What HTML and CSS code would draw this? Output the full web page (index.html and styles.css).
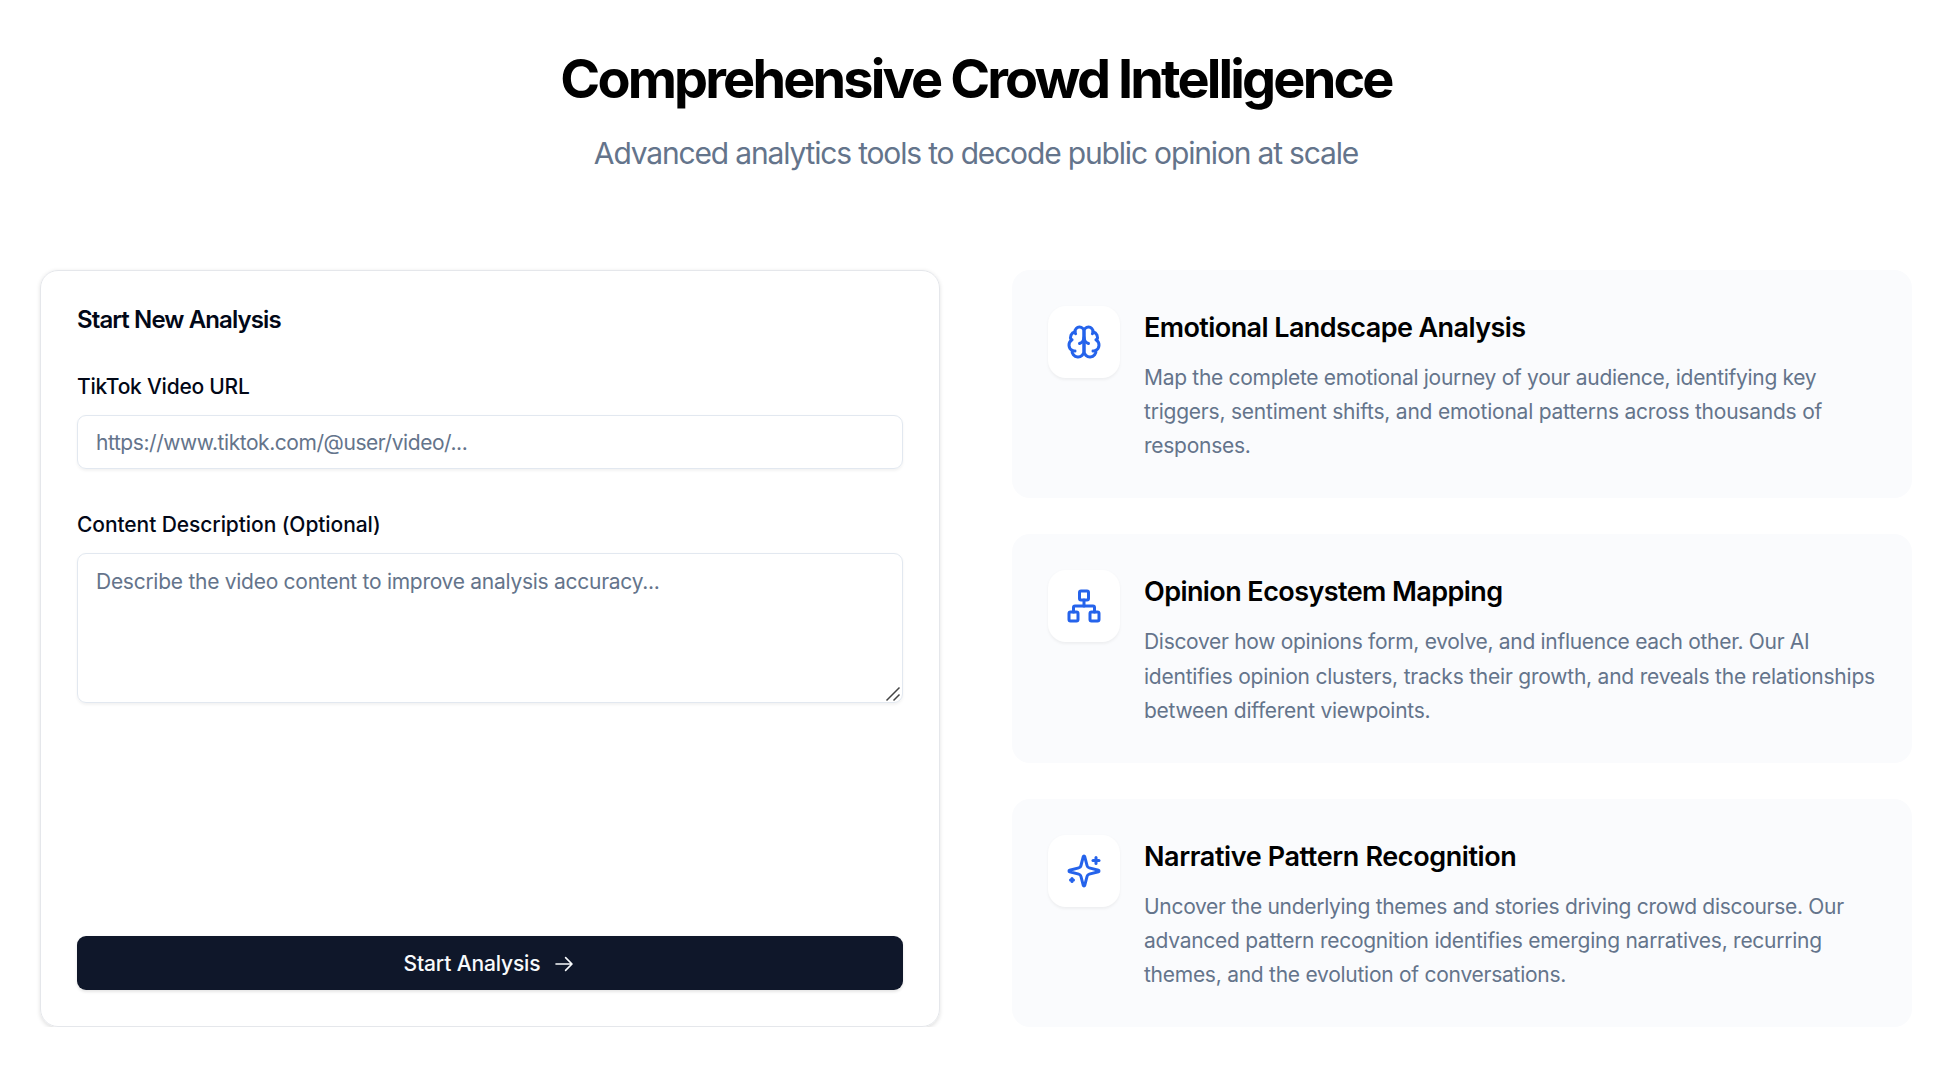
FILE: index.html
```
<!DOCTYPE html>
<html lang="en">
<head>
<meta charset="utf-8">
<title>Comprehensive Crowd Intelligence</title>
<link rel="stylesheet" href="styles.css">
</head>
<body>
<header class="intro">
  <h1 class="intro-title">Comprehensive Crowd Intelligence</h1>
  <p class="intro-text">Advanced analytics tools to decode public opinion at scale</p>
</header>
<main class="columns">
  <form class="card">
    <h2 class="card-title">Start New Analysis</h2>
    <label class="label label-url" for="url">TikTok Video URL</label>
    <input class="field field-url" id="url" type="text" placeholder="https://www.tiktok.com/@user/video/...">
    <label class="label label-description" for="desc">Content Description (Optional)</label>
    <div class="area">
      <textarea class="field field-area" id="desc" placeholder="Describe the video content to improve analysis accuracy..."></textarea>
      <svg class="grip" viewBox="0 0 16 16"><path d="M1.5 14.5 14.5 1.5M8.5 14.5l6-6"/></svg>
    </div>
    <button class="submit" type="button">Start Analysis
      <svg class="arrow" viewBox="0 0 15 15"><path fill="currentColor" fill-rule="evenodd" clip-rule="evenodd" d="M8.146 3.146a.5.5 0 0 1 .708 0l4 4a.5.5 0 0 1 0 .708l-4 4a.5.5 0 0 1-.708-.708L11.293 8H2.5a.5.5 0 0 1 0-1h8.793L8.146 3.854a.5.5 0 0 1 0-.708Z"/></svg>
    </button>
  </form>
  <section class="features">
    <article class="feature">
      <div class="tile"><svg class="icon" viewBox="0 0 24 24"><path d="M12 5a3 3 0 1 0-5.997.125 4 4 0 0 0-2.526 5.77 4 4 0 0 0 .556 6.588A4 4 0 1 0 12 18Z"/><path d="M12 5a3 3 0 1 1 5.997.125 4 4 0 0 1 2.526 5.77 4 4 0 0 1-.556 6.588A4 4 0 1 1 12 18Z"/><path d="M15 13a4.5 4.5 0 0 1-3-4 4.5 4.5 0 0 1-3 4"/><path d="M17.599 6.5a3 3 0 0 0 .399-1.375"/><path d="M6.003 5.125A3 3 0 0 0 6.401 6.5"/><path d="M3.477 10.896a4 4 0 0 1 .585-.396"/><path d="M19.938 10.5a4 4 0 0 1 .585.396"/><path d="M6 18a4 4 0 0 1-1.967-.516"/><path d="M19.967 17.484A4 4 0 0 1 18 18"/></svg></div>
      <div class="feature-body">
        <h3 class="feature-title">Emotional Landscape Analysis</h3>
        <p class="feature-text"><span class="tight">Map the complete emotional journey of your audience, identifying key</span><br><span class="loose">triggers, sentiment shifts, and emotional patterns across thousands of</span><br>responses.</p>
      </div>
    </article>
    <article class="feature">
      <div class="tile"><svg class="icon" viewBox="0 0 24 24"><rect x="16" y="16" width="6" height="6" rx="1"/><rect x="2" y="16" width="6" height="6" rx="1"/><rect x="9" y="2" width="6" height="6" rx="1"/><path d="M5 16v-3a1 1 0 0 1 1-1h12a1 1 0 0 1 1 1v3"/><path d="M12 12V8"/></svg></div>
      <div class="feature-body">
        <h3 class="feature-title">Opinion Ecosystem Mapping</h3>
        <p class="feature-text"><span class="tight">Discover how opinions form, evolve, and influence each other. Our AI</span><br><span class="loose">identifies opinion clusters, tracks their growth, and reveals the relationships</span><br>between different viewpoints.</p>
      </div>
    </article>
    <article class="feature">
      <div class="tile"><svg class="icon" viewBox="0 0 24 24"><path d="M9.937 15.5A2 2 0 0 0 8.5 14.063l-6.135-1.582a.5.5 0 0 1 0-.962L8.5 9.936A2 2 0 0 0 9.937 8.5l1.582-6.135a.5.5 0 0 1 .963 0L14.063 8.5A2 2 0 0 0 15.5 9.937l6.135 1.581a.5.5 0 0 1 0 .964L15.5 14.063a2 2 0 0 0-1.437 1.437l-1.582 6.135a.5.5 0 0 1-.963 0z"/><path d="M20 3v4"/><path d="M22 5h-4"/><path d="M4 17v2"/><path d="M5 18H3"/></svg></div>
      <div class="feature-body">
        <h3 class="feature-title feature-title-loose">Narrative Pattern Recognition</h3>
        <p class="feature-text"><span class="tight">Uncover the underlying themes and stories driving crowd discourse. Our</span><br>advanced pattern recognition identifies emerging narratives, recurring<br>themes, and the evolution of conversations.</p>
      </div>
    </article>
  </section>
</main>
</body>
</html>
```
FILE: styles.css
```
* { box-sizing: border-box; margin: 0; }
body {
  padding: 37px 46px 0 40px;
  background: #fff;
  color: #020817;
  font-family: Inter, "Liberation Sans", sans-serif;
}
.intro { text-align: center; color: #000; }
.intro-title { font-size: 54px; line-height: 84px; font-weight: 700; letter-spacing: -2.86px; }
.intro-text { padding-top: 11px; font-size: 30px; line-height: 42px; letter-spacing: -1.17px; color: #64748b; }
.columns { display: grid; grid-template-columns: 900px 900px; align-items: start; gap: 72px; margin-top: 96px; }
.card {
  display: flex;
  flex-direction: column;
  height: 757px;
  padding: 36px;
  border: 1.5px solid #e5e7eb;
  border-radius: 18px;
  box-shadow: 0 1.5px 4px rgba(0, 0, 0, .12);
}
.card-title { margin-top: 1px; font-size: 24px; line-height: 24px; font-weight: 600; letter-spacing: -.9px; }
.label { font-size: 21px; line-height: 30px; font-weight: 500; }
.label-url { margin-top: 40px; letter-spacing: -.24px; }
.label-description { margin-top: 41px; letter-spacing: -.08px; }
.field {
  display: block;
  width: 100%;
  height: 54px;
  border: 1px solid #e2e8f0;
  border-radius: 9px;
  background: transparent;
  font: 21px Inter, "Liberation Sans", sans-serif;
  box-shadow: 0 1.5px 3px rgba(0, 0, 0, .05);
}
.field::placeholder { color: #64748b; opacity: 1; }
.field-url { margin-top: 13px; padding: 0 18px; letter-spacing: -.44px; }
.area { position: relative; margin-top: 13px; }
.field-area { height: 150px; padding: 13px 18px; line-height: 30px; letter-spacing: -.27px; resize: none; }
.grip { position: absolute; right: 2px; bottom: 1px; width: 16px; height: 16px; fill: none; stroke: #444; stroke-width: 1.5; }
.submit {
  display: flex;
  align-items: center;
  justify-content: center;
  gap: 12px;
  height: 54px;
  margin-top: auto;
  padding-top: 2px;
  border: 0;
  border-radius: 9px;
  background: #0f172a;
  color: #f8fafc;
  font: 500 21px Inter, "Liberation Sans", sans-serif;
  letter-spacing: -.14px;
  box-shadow: 0 1.5px 3px rgba(0, 0, 0, .1);
}
.arrow { width: 24px; height: 24px; }
.features { display: grid; gap: 36px; min-width: 0; }
.feature { display: flex; gap: 24px; padding: 36px; border-radius: 18px; background: #fafbfd; }
.tile {
  display: grid;
  place-items: center;
  flex: none;
  width: 72px;
  height: 72px;
  border-radius: 18px;
  background: #fff;
  box-shadow: 0 1.5px 3px rgba(0, 0, 0, .05);
}
.icon { width: 36px; height: 36px; fill: none; stroke: #2563eb; stroke-width: 2; stroke-linecap: round; stroke-linejoin: round; }
.feature-body { min-width: 0; padding-top: 1px; margin-bottom: -.9px; }
.feature-title { margin-bottom: 12px; font-size: 27px; line-height: 42px; font-weight: 600; letter-spacing: -.58px; color: #000; }
.feature-title-loose { letter-spacing: -.4px; }
.feature-text { font-size: 21px; line-height: 34.125px; letter-spacing: -.26px; color: #64748b; white-space: nowrap; }
.tight { letter-spacing: -.3px; }
.loose { letter-spacing: -.22px; }
```
